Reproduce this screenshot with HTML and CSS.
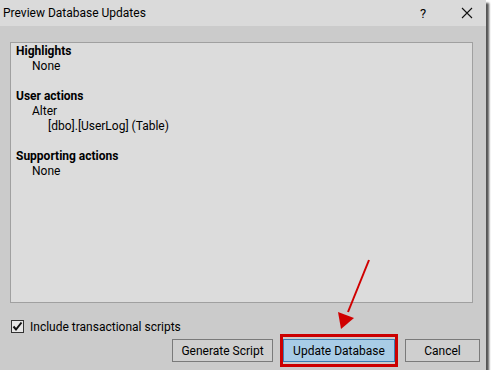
FILE: index.html
```html
<!DOCTYPE html>
<html lang="en">
  <head>
    <meta charset="UTF-8" />
    <title>Preview Database Updates</title>
    <link rel="stylesheet" href="styles.css">
  </head>
  <body>
    <div class="dialog">
      <div class="titlebar">
        <span class="title">Preview Database Updates</span>
        <span class="help">?</span>
        <svg class="close" width="12" height="12" viewBox="0 0 12 12">
          <path d="M1 1L11 11M11 1L1 11" stroke="#111" stroke-width="1.1" fill="none" />
        </svg>
      </div>
      <div class="content">
        <div class="summary">
          <div class="heading">Highlights</div>
          <div class="lvl1">None</div>
          <div class="blank"></div>
          <div class="heading">User actions</div>
          <div class="lvl1">Alter</div>
          <div class="lvl2">[dbo].[UserLog] (Table)</div>
          <div class="blank"></div>
          <div class="heading">Supporting actions</div>
          <div class="lvl1">None</div>
        </div>
        <label class="check-row">
          <span class="checkbox">
            <svg width="11" height="11" viewBox="0 0 11 11">
              <path d="M1.5 5.5L4 8.5L9.5 1.5" stroke="#111" stroke-width="2" fill="none" />
            </svg>
          </span>
          Include transactional scripts
        </label>
        <div class="buttons">
          <button type="button" class="btn generate">Generate Script</button>
          <span class="highlight">
            <button type="button" class="btn primary">Update Database</button>
          </span>
          <button type="button" class="btn cancel">Cancel</button>
        </div>
        <div class="grip"></div>
      </div>
    </div>
    <!-- red callout arrow drawn over the dialog -->
    <svg class="arrow" width="491" height="374" viewBox="0 0 491 374">
      <line x1="369" y1="260" x2="348" y2="312" stroke="#d00000" stroke-width="2" />
      <polygon points="338,312 354,318 341,329" fill="#d00000" />
    </svg>
  </body>
</html>
```

FILE: styles.css
```css
body {
  margin: 0;
  background-color: #ffffff;
  font-family: Roboto, "Noto Sans", sans-serif;
  font-size: 12px;
  color: #000000;
}
.dialog {
  width: 486px;
  height: 370px;
  background-color: #cbcbcb;
  box-shadow: 3px 3px 2px #555555;
  display: flex;
  flex-direction: column;
  position: relative;
}
.titlebar {
  height: 26px;
  background-color: #dadada;
  display: flex;
  align-items: center;
  padding-left: 3px;
}
.title {
  flex: 1;
}
.help {
  width: 14px;
  margin-right: 27px;
  font-size: 13px;
}
.close {
  margin-right: 13px;
}
.content {
  flex: 1;
  display: flex;
  flex-direction: column;
  padding: 16px 6px 0 10px;
}
.summary {
  height: 257px;
  margin-right: 7px;
  background-color: #dcdcdc;
  border: 1px solid #a0a0a0;
  padding: 1px 5px;
  line-height: 15px;
}
.heading {
  font-weight: bold;
}
.lvl1 {
  padding-left: 16px;
}
.lvl2 {
  padding-left: 32px;
}
.blank {
  height: 15px;
}
.check-row {
  display: flex;
  align-items: center;
  gap: 6px;
  margin-top: 17px;
  margin-left: 1px;
  height: 13px;
}
.checkbox {
  width: 11px;
  height: 11px;
  border: 1px solid #333333;
  background-color: #e6e6e6;
  display: flex;
}
.buttons {
  display: flex;
  justify-content: flex-end;
  align-items: center;
  gap: 7px;
  margin-top: 1px;
}
.btn {
  height: 23px;
  padding: 0;
  border: 1px solid #7a7a7a;
  background-color: #cfcfcf;
  font-family: inherit;
  font-size: 12px;
  color: #000000;
}
.generate {
  width: 101px;
}
.highlight {
  border: 3px solid #cc0000;
  padding: 2px 0;
  display: flex;
}
.primary {
  width: 112px;
  background-color: #a8cce6;
  border-color: #3b7fb3;
}
.cancel {
  width: 75px;
}
.grip {
  position: absolute;
  right: 2px;
  bottom: 2px;
  width: 5px;
  height: 5px;
  background-image: radial-gradient(#8a8a8a 40%, transparent 45%);
  background-size: 2px 2px;
}
.arrow {
  position: absolute;
  left: 0;
  top: 0;
}
```
